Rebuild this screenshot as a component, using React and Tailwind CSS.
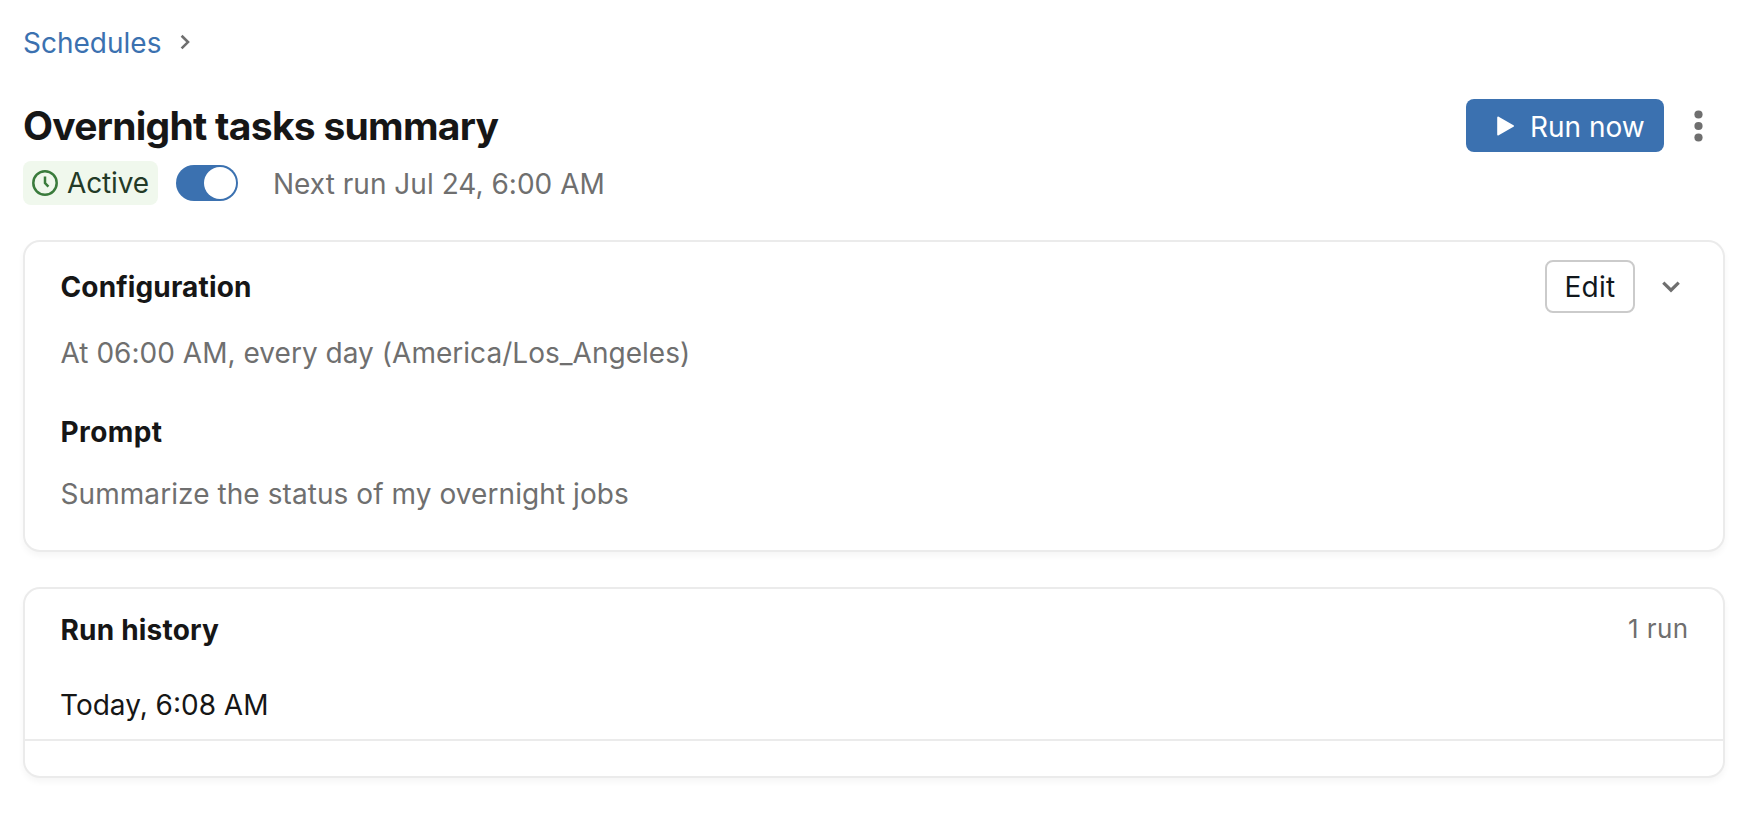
function Card({ className, children }) {
  return (
    <section
      className={`rounded-[17px] border-2 border-[#ebebeb] bg-white shadow-[0_4px_6px_rgba(0,0,0,0.04)] ${className}`}
    >
      {children}
    </section>
  );
}

function ClockIcon() {
  return (
    <svg width="26" height="26" viewBox="0 0 26 26" fill="none" stroke="#3a7b3c" strokeWidth="2.5">
      <circle cx="13" cy="13" r="11.7" />
      <path d="M13 6.4V13l3.4 3.6" />
    </svg>
  );
}

export default function App() {
  return (
    <main className="h-[820px] w-full bg-white pt-[23px] pr-[29px] pl-[23px] font-['Inter',sans-serif] text-[28px] leading-[40px] text-[#161616]">
      <nav className="flex h-10 items-center">
        <a className="text-[#3b71b0]">Schedules</a>
        <svg className="mb-0.5 ml-[19px]" width="10" height="16" viewBox="0 0 10 16" fill="none" stroke="#6f6f6f" strokeWidth="2.6">
          <path d="M1.6 1.8 8 8.1 1.6 14.4" />
        </svg>
      </nav>

      <header className="mt-9 flex h-[53px] items-center">
        <h1 className="text-[39px] font-bold leading-[52px] tracking-[-0.73px]">Overnight tasks summary</h1>
        <button className="ml-auto flex h-[53px] w-[198px] items-center rounded-lg bg-[#3b71b0] pl-[31px] text-white">
          <svg width="18" height="20" viewBox="0 0 18 20" fill="#fff" stroke="#fff" strokeWidth="2" strokeLinejoin="round">
            <path d="M1.2 1.6 16 10 1.2 18.4Z" />
          </svg>
          <span className="ml-[15px] pt-0.5">Run now</span>
        </button>
        <button className="mr-[22px] ml-[30px] flex h-8 w-[9px] items-center">
          <svg width="9" height="32" viewBox="0 0 9 32" fill="#6f6f6f">
            <circle cx="4.5" cy="4.5" r="4.1" />
            <circle cx="4.5" cy="16" r="4.1" />
            <circle cx="4.5" cy="27.5" r="4.1" />
          </svg>
        </button>
      </header>

      <div className="mt-[9px] flex h-11 items-center">
        <span className="flex h-11 w-[135px] items-center rounded-lg bg-[#f0f8ed] pl-[9px] text-[#233a26]">
          <ClockIcon />
          <span className="ml-[9px] tracking-[-0.15px]">Active</span>
        </span>
        <button className="ml-[18px] flex h-9 w-[62px] items-center justify-end rounded-full bg-[#3b71b0] pr-0.5">
          <span className="h-8 w-8 rounded-full bg-white" />
        </button>
        <span className="ml-[35px] pt-0.5 tracking-[0.02px] text-[#6f6f6f]">Next run Jul 24, 6:00 AM</span>
      </div>

      <Card className="mt-[35px] h-[312px] px-[35.5px] pt-[18px]">
        <div className="flex h-[53px] items-center">
          <h2 className="font-bold tracking-[0.15px]">Configuration</h2>
          <button className="ml-auto flex h-[53px] w-[90px] items-center justify-center rounded-lg border-2 border-[#cbcbcb] tracking-[0.3px] text-[#11171c]">
            Edit
          </button>
          <svg className="mt-px mr-[7.5px] ml-[27px]" width="18" height="12" viewBox="0 0 18 12" fill="none" stroke="#6f6f6f" strokeWidth="3.2">
            <path d="M1.3 1.6 9 9.2l7.7-7.6" />
          </svg>
        </div>
        <p className="mt-5 tracking-[0.03px] text-[#6f6f6f]">At 06:00 AM, every day (America/Los_Angeles)</p>
        <h2 className="mt-[39px] font-bold tracking-[0.4px]">Prompt</h2>
        <p className="mt-[22px] tracking-[0.07px] text-[#6f6f6f]">Summarize the status of my overnight jobs</p>
      </Card>

      <Card className="mt-[35px] h-[191px] pt-[21px]">
        <div className="flex h-10 items-center justify-between px-[35.5px]">
          <h2 className="font-bold tracking-[0.2px]">Run history</h2>
          <span className="-mr-px pb-0.5 text-[26px] tracking-[0.4px] text-[#6f6f6f]">1 run</span>
        </div>
        <div className="mt-[35px] h-14 border-b-2 border-[#ebebeb] px-[35px]">Today, 6:08 AM</div>
      </Card>
    </main>
  );
}
